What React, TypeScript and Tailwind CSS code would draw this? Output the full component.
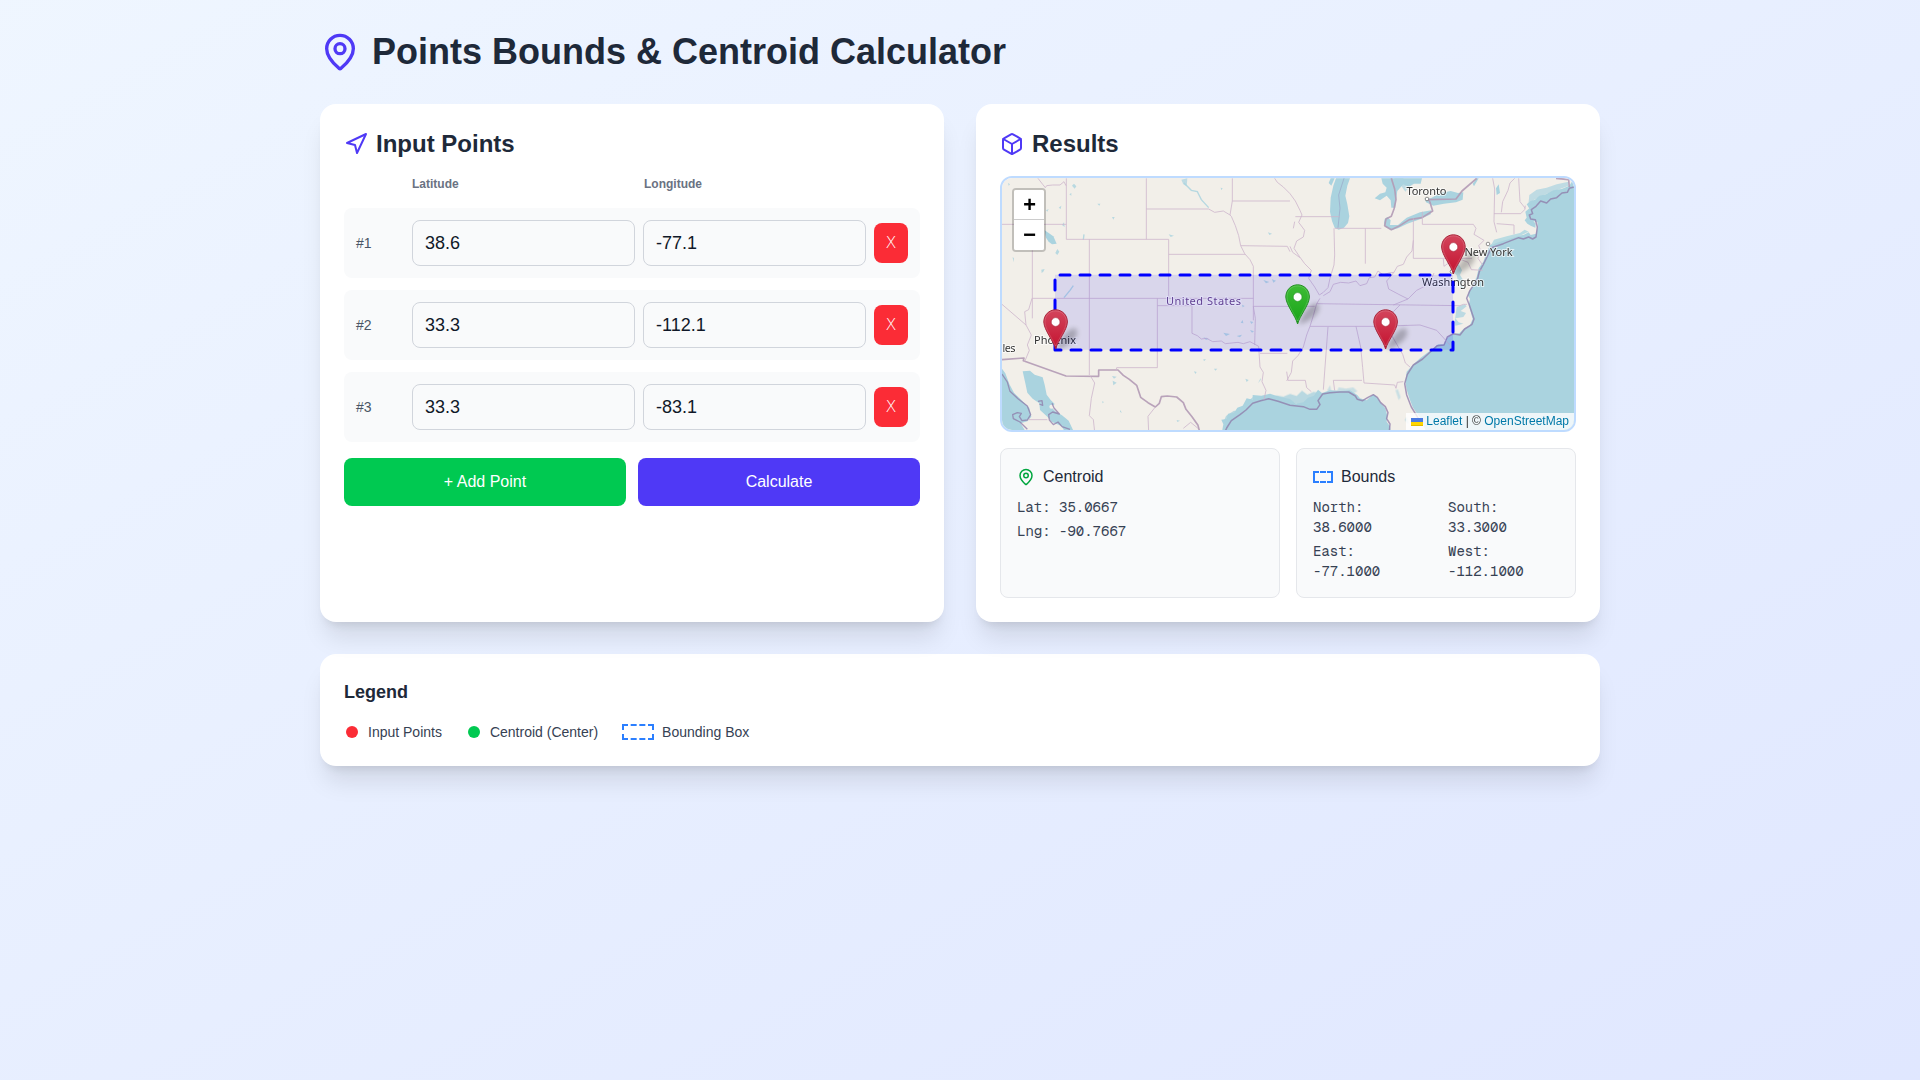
import { ReactNode } from "react";
import { Box, MapPin, Navigation } from "lucide-react";

const points = [
  { lat: "38.6", lng: "-77.1" },
  { lat: "33.3", lng: "-112.1" },
  { lat: "33.3", lng: "-83.1" },
];

const WATER = "#aad3df";

function Pin({ x, y, kind }: { x: number; y: number; kind: "red" | "green" }) {
  return (
    <g transform={`translate(${x} ${y})`}>
      <path d="M1 0C4 -9 10 -18 18 -21C24 -20 22 -12 16 -7C11 -3 5 0 1 0Z" fill="#000" opacity="0.24" filter="url(#soft)" />
      <path
        d="M0 0C-2 -8 -11.6 -19 -11.8 -27C-11.8 -34 -6.5 -39.2 0 -39.2C6.5 -39.2 11.8 -34 11.8 -27C11.6 -19 2 -8 0 0Z"
        fill={kind === "red" ? "url(#redPin)" : "url(#greenPin)"}
        stroke={kind === "red" ? "#a8253a" : "#238f23"}
        strokeWidth="1"
      />
      <path
        d="M0 -3C-3 -10 -10.5 -20 -10.7 -27C-10.7 -33.4 -6 -38.1 0 -38.1C6 -38.1 10.7 -33.4 10.7 -27C10.5 -20 3 -10 0 -3Z"
        fill="none"
        stroke="#fff"
        strokeOpacity="0.15"
        strokeWidth="1"
      />
      <circle cx="0" cy="-27" r="4.4" fill="#fff" stroke={kind === "red" ? "#a8253a" : "#238f23"} strokeWidth="0.6" />
    </g>
  );
}

function MapDrawing() {
  return (
    <svg className="block h-full w-full" viewBox="1002 178 572 252" preserveAspectRatio="none">
      <defs>
        <filter id="soft" x="-50%" y="-50%" width="200%" height="200%">
          <feGaussianBlur stdDeviation="2.6" />
        </filter>
        <linearGradient id="redPin" x1="0" y1="0" x2="0" y2="1">
          <stop offset="0" stopColor="#d3455c" />
          <stop offset="1" stopColor="#c4122f" />
        </linearGradient>
        <linearGradient id="greenPin" x1="0" y1="0" x2="0" y2="1">
          <stop offset="0" stopColor="#3ebc35" />
          <stop offset="1" stopColor="#17a317" />
        </linearGradient>
      </defs>
      <rect x="1002" y="178" width="572" height="252" fill="#f2efe9" />

      {/* Atlantic, Gulf and Pacific coasts */}
      <g transform="translate(1290 165) scale(0.33333)" fill={WATER}>
        <path d="M852 40L838 62L815 72L790 76L768 88L748 92L735 104L722 108L710 118L718 130L706 140L710 158L704 166L712 176L722 182L736 188L737 176L730 168L742 172L744 186L738 206L722 210L716 202L700 210L680 212L640 222L600 240L590 262L580 290L566 310L560 336L552 350L545 368L536 380L534 392L540 402L536 420L548 462L540 480L520 492L508 505L488 507L468 522L462 538L444 538L430 550L410 565L390 580L366 602L350 620L346 652L350 674L358 700L368 726L380 745L392 760L408 800L860 800L860 36Z" />
        <path d="M602 242L612 224L650 214L690 204L704 194L716 200L690 212L650 224L618 234Z" fill="#b9dbe2" />
        <path d="M-204 800L-200 778L-206 764L-190 762L-186 746L-168 744L-158 728L-142 722L-130 700L-112 704L-112 690L-86 692L-60 686L-30 696L0 702L18 716L40 712L54 698L72 692L84 674L96 684L120 676L150 678L180 676L202 690L210 700L230 706L250 688L262 698L274 716L286 730L292 752L290 770L300 784L302 800Z" />
        <path d="M500 426L524 418L530 424L512 438L528 444L520 456L496 460L506 472L520 476L496 482L494 470Z" opacity="0.75" />
        <path d="M496 300L506 296L516 316L510 330L520 346L514 360L526 372L514 370L504 350L500 330L490 322Z" opacity="0.8" />
      </g>
      <g transform="translate(990 300) scale(0.33333)" fill={WATER}>
        <path d="M36 206L46 220L58 252L72 278L92 298L118 324L124 350L112 364L92 370L104 390L112 400L36 400Z" />
        <path d="M98 214L120 212L134 224L158 232L164 254L170 284L182 300L194 312L184 322L196 334L216 346L236 362L250 392L228 400L214 378L186 366L172 350L150 330L148 310L128 296L112 278L106 250Z" />
        <circle cx="184" cy="320" r="6" fill="#f2efe9" />
      </g>

      {/* Great Lakes and inland water */}
      <g transform="translate(1290 165) scale(0.33333)" fill={WATER}>
        <path d="M138 40L130 62L122 98L120 140L126 168L134 188L146 194L162 188L174 174L178 154L172 118L166 92L172 62L180 40Z" />
        <path d="M122 40L116 54L124 62L134 40Z" />
        <path d="M274 40L278 56L290 68L286 82L270 86L254 100L270 106L290 92L302 106L304 128L316 128L318 106L322 78L340 58L356 66L372 56L392 56L396 40Z" />
        <path d="M312 40L332 60L346 80L354 70L342 50L340 40Z" opacity="0.7" />
        <path d="M284 162L292 156L302 166L300 180L324 180L350 158L390 142L424 136L422 148L392 162L352 176L324 190L304 196L286 186L282 174Z" />
        <path d="M404 100L422 100L452 84L482 78L504 84L520 82L518 104L498 112L462 116L430 122L408 112Z" />
        <path d="M560 40L548 56L552 64L566 40Z M626 58L630 84L620 90L618 70Z" />
        <path d="M718 90L740 74L770 68L800 58L836 50L836 62L800 76L760 90L730 106L714 128Z" opacity="0.7" />
      </g>
      <path transform="translate(1290 165) scale(0.33333)" d="M144 188L150 130L146 90L162 40" fill="none" stroke="#9fb4cf" strokeWidth="3" />
      <g transform="translate(990 165) scale(0.33333)" fill={WATER}>
        <path d="M164 196L176 204L190 214L200 236L186 238L176 230L168 218Z" />
        <path d="M246 62L252 56L259 64L254 71Z M238 88L244 84L244 92Z M216 180L222 172L224 186Z M154 314L164 312L160 320L155 324Z M196 264L202 252L208 260L202 270Z M206 128L214 122L212 132Z M168 136L176 132L172 140Z M54 54L60 58L56 62Z M322 116L331 116L328 122Z M366 156L374 156L370 164Z M536 208L552 212L542 216Z M692 68L698 70L694 76Z M834 202L846 206L838 210Z M68 276L72 280L70 292Z M708 302L714 308Z" opacity="0.8" />
        <path d="M574 44L592 40L590 64L580 58Z" opacity="0.7" />
        <path d="M582 54L604 76L622 80L634 104L656 128 M222 398L240 376L250 362 M280 224L282 208" fill="none" stroke={WATER} strokeWidth="4" opacity="0.85" />
      </g>
      <g fill={WATER} opacity="0.8" transform="translate(990 300) scale(0.33333)">
        <path d="M366 228L380 230L372 236Z M368 242L380 248L370 256Z M336 304L342 306L338 310Z M390 330L396 338L390 336Z M612 214L620 216L616 222Z M766 236L776 240L770 246Z M672 206L682 206L676 212Z M640 178L648 178L642 184Z M560 360L570 362L562 366Z M702 362L708 348L720 340L732 332L744 334L722 348L708 368Z M778 300L790 290L786 306Z M804 250L812 234L812 240Z M818 290L880 294L890 302L810 300Z" />
        <path d="M820 -60L838 -54L828 -50Z M846 -62L858 -58L850 -52Z M756 14L764 18L758 22Z M780 64L790 66L784 72Z M752 68L758 60L760 70Z M700 98L720 102L708 108Z M740 108L756 104L750 112Z M640 112L656 116L648 120Z M780 90L792 94L786 98Z" />
      </g>
      <g fill={WATER} opacity="0.8" transform="translate(1290 300) scale(0.33333)">
        <path d="M-60 298L-40 286L-20 290L0 282L20 288L36 272L52 284L70 276L92 278L84 296L70 302L84 312L66 322L50 312L30 318L10 308L-20 302Z" />
        <path d="M112 270L120 256L124 272L142 272L146 262L168 266L190 262L202 274L190 280L116 278Z M316 270L324 268L332 292L326 300Z M344 360L350 350L356 372Z" opacity="0.7" />
      </g>

      {/* Coastal boundary */}
      <g fill="none" stroke="#8d79a8" strokeOpacity="0.75" strokeWidth="4.5" strokeLinejoin="round">
        <path transform="translate(1290 165) scale(0.33333)" d="M852 66L838 70L832 82L816 84L800 98L782 102L770 114L752 108L738 124L724 134L728 146L718 150L722 162L736 164L742 186L738 216L728 222L716 216L700 222L686 218L640 236L604 248L594 270L580 298L568 320L562 344L552 358L540 376L530 400L538 420L546 444L552 462L546 478L524 492L510 510L490 506L472 516L462 540L442 542L424 558L398 582L370 600L352 628L344 656L350 690L364 726L380 752L396 780" />
        <path transform="translate(1290 300) scale(0.33333)" d="M-196 398L-190 384L-176 362L-150 344L-132 330L-112 310L-88 302L-64 296L-36 304L0 316L40 320L60 328L80 328L90 314L84 302L98 282L120 278L150 276L176 276L196 288L202 298L218 302L234 292L250 284L262 292L272 308L286 320L294 338L290 356L300 372L298 396" />
        <path transform="translate(990 300) scale(0.33333)" d="M36 222L52 246L60 274L84 296L112 318L122 344L112 360L96 362L88 350L94 340L82 338L68 344L70 356L90 366L112 388 M144 304L156 302L158 316L148 312 M186 310L192 324L208 342L188 336L176 344L178 360L190 374L204 366L216 380L240 388" strokeWidth="4" />
      </g>

      {/* National borders */}
      <g fill="none" stroke="#b39ab5" strokeWidth="5" strokeLinejoin="round" strokeOpacity="0.9">
        <path transform="translate(990 300) scale(0.33333)" d="M36 179L102 174L100 182L228 228L326 229L326 210L384 210L400 226L418 238L440 256L452 292L474 308L496 321L508 310L514 290L532 288L560 291L580 308L588 328L606 350L624 376L628 392" />
        <path transform="translate(1290 165) scale(0.33333)" d="M304 40L314 72L318 104L312 132L304 154L288 162L284 182L304 194L326 184L358 164L396 158L428 138L420 112L416 104L498 102L516 78L560 40 M798 40L836 44L838 66" />
      </g>

      {/* State boundaries */}
      <g fill="none" stroke="#cdb5cb" strokeWidth="3" strokeOpacity="0.8" strokeLinejoin="round">
        <g transform="translate(990 165) scale(0.33333)">
          <path d="M36 178L229 178 M229 40L229 223L536 223L536 400 M469 40L469 223 M469 132L656 132L674 142L700 138L720 150L724 154L736 182L746 212L752 242L764 266L780 284L790 304L790 466 M536 268L766 268 M127 256L127 460 M127 400L790 400 M298 223L298 630 M727 40L727 108L720 150 M727 108L900 108 M752 242L892 244L900 260 M144 40L158 58L166 68L170 62L188 60L210 60L222 50L228 62" />
          <path d="M854 40L862 52L880 66L900 86L916 108L930 136L936 150L926 172L944 196L940 216L920 228L912 250L928 274L944 296L964 316L956 340L974 366L988 390L1000 382L1014 368L1020 340L1032 300L1034 270L1032 190 M900 244L908 262L930 278 M916 155L1048 155 M1034 190L1174 190 M1126 190L1126 296 M1270 160L1270 280L1446 280 M1297 140L1297 178L1450 178L1458 190L1452 208L1482 226L1466 242L1472 256L1464 280L1478 300 M910 190L914 170 M1508 40L1514 72L1512 170L1520 202 M1512 146L1592 146L1604 134L1606 122 M1534 142L1538 110L1554 76L1560 54L1574 40 M1586 40L1590 110L1606 130 M1520 176L1572 180L1572 208 M1360 282L1362 304L1386 286L1402 300L1414 284L1434 292L1444 314L1478 316" />
          <path d="M1270 226L1266 258L1250 276L1240 298L1222 304L1212 322L1196 324L1180 330L1164 318L1154 336L1138 338L1130 356L1110 362L1098 348L1076 354L1052 352L1030 358L1020 380L1000 392 M1212 322L1190 348L1196 372L1230 390L1254 402L1280 376L1300 366L1320 352L1332 324 M980 416L1410 422L1420 418L1431 418 M960 484L1164 484L1290 480L1340 496L1380 540 M790 424L974 424 M1254 402L1210 420 M1176 480L1170 460L1210 440L1230 420" />
          <path d="M502 400L502 608L380 608L378 618 M502 422L606 422L606 505L622 512L634 522L650 520L668 530L694 528L706 536L744 532L760 536L780 530L806 544L810 606L820 622L816 650L828 676L822 704 M790 424L796 460L794 540 M810 565L892 565 M890 620L894 646L946 646L950 668L964 680 M36 418L108 480L104 440L116 434L126 400 M108 480L124 510L112 540L118 556L104 590 M302 634L314 654L304 700L298 752L310 764L314 800 M496 726L474 754L476 800 M114 764L172 764 M580 790L602 772L624 790" />
          <path d="M990 400L980 416L970 452L960 484L950 510L940 546L924 572L908 588L904 622L890 648 M1014 486L1000 674 M1098 484L1112 546L1118 608L1122 654L1214 660L1218 670L1222 652L1240 650 M1030 646L1116 646 M1030 646L1034 676 M1190 480L1210 520L1238 568L1246 594L1260 606" />
        </g>
      </g>

      {/* City markers and names */}
      <g fill="#fff" stroke="#666" strokeWidth="0.7">
        <circle cx="1427" cy="199" r="1.8" />
        <circle cx="1488" cy="244" r="1.8" />
        <circle cx="1452" cy="271.5" r="1.8" />
      </g>
      <g fontFamily="Noto Sans, sans-serif" fontSize="11" fill="#333" stroke="#fff" strokeOpacity="0.65" strokeWidth="2" paintOrder="stroke" textAnchor="middle">
        <text x="1426.5" y="195" textLength="40">Toronto</text>
        <text x="1488.5" y="256" textLength="48">New York</text>
        <text x="1453" y="285.5" textLength="62">Washington</text>
        <text x="1055" y="344" textLength="42">Phoenix</text>
        <text x="1009" y="352" textLength="13">les</text>
        <text x="1203.5" y="305" fill="#6e4a86" textLength="75">United States</text>
      </g>

      {/* Bounding rectangle */}
      <rect x="1055" y="274.8" width="398" height="75" fill="#00f" fillOpacity="0.1" />
      <path d="M1055 350L1055 275L1453 275L1453 350Z" fill="none" stroke="#00f" strokeWidth="3" strokeDasharray="10 10" strokeLinecap="round" strokeLinejoin="round" />

      <Pin x={1453.4} y={274} kind="red" />
      <Pin x={1297.6} y={324} kind="green" />
      <Pin x={1055.6} y={349} kind="red" />
      <Pin x={1385.6} y={349} kind="red" />
    </svg>
  );
}

function Card({ children }: { children: ReactNode }) {
  return <section className="rounded-2xl bg-white p-6 shadow-xl">{children}</section>;
}

export default function App() {
  return (
    <div className="min-h-screen bg-linear-to-br from-blue-50 to-indigo-100 p-8 font-['Liberation_Sans',sans-serif] text-gray-900">
      <div className="mx-auto max-w-[1280px]">
        <h1 className="mb-8 flex items-center gap-3 text-4xl font-bold text-gray-800">
          <MapPin size={40} className="text-indigo-600" />
          Points Bounds &amp; Centroid Calculator
        </h1>

        <div className="grid grid-cols-2 gap-8">
          <Card>
            <h2 className="mb-4 flex items-center gap-2 text-2xl font-bold text-gray-800">
              <Navigation size={24} className="text-indigo-600" />
              Input Points
            </h2>
            <div className="mb-4 flex gap-2 px-3 text-xs font-bold text-gray-500">
              <span className="w-12" />
              <span className="flex-1">Latitude</span>
              <span className="flex-1">Longitude</span>
              <span className="w-8" />
            </div>
            <div className="flex flex-col gap-3">
              {points.map((p, i) => (
                <div key={i} className="flex items-center gap-2 rounded-lg bg-gray-50 p-3">
                  <span className="w-12 text-sm text-gray-600">#{i + 1}</span>
                  <input className="min-w-0 flex-1 rounded-lg border border-gray-300 px-3 py-2 text-lg" defaultValue={p.lat} />
                  <input className="min-w-0 flex-1 rounded-lg border border-gray-300 px-3 py-2 text-lg" defaultValue={p.lng} />
                  <button className="w-[34px] rounded-lg bg-red-500 py-2 text-center font-['DejaVu_Sans',sans-serif] font-extralight text-white">X</button>
                </div>
              ))}
            </div>
            <div className="mt-4 flex gap-3">
              <button className="flex-1 rounded-lg bg-green-500 py-3 text-white">+ Add Point</button>
              <button className="flex-1 rounded-lg bg-indigo-600 py-3 text-white">Calculate</button>
            </div>
          </Card>

          <Card>
            <h2 className="mb-4 flex items-center gap-2 text-2xl font-bold text-gray-800">
              <Box size={24} className="text-indigo-600" />
              Results
            </h2>
            <div className="relative mb-4 h-64 overflow-hidden rounded-xl border-2 border-blue-200">
              <MapDrawing />
              <div className="absolute top-[10px] left-[10px] rounded-[4px] border-2 border-black/20 bg-clip-padding">
                <button className="block h-[30px] w-[30px] rounded-t-[2px] border-b border-[#ccc] bg-white pl-px text-center font-['Liberation_Mono',monospace] text-[22px] leading-[33px] font-bold text-black">
                  +
                </button>
                <button className="block h-[30px] w-[30px] rounded-b-[2px] bg-white pl-px text-center font-['Liberation_Mono',monospace] text-[22px] leading-[33px] font-bold text-black">
                  −
                </button>
              </div>
              <div className="absolute right-0 bottom-0 flex items-center bg-white/80 px-[5px] text-xs leading-[16.8px] text-[#333]">
                <svg className="mr-[3px] h-2 w-3" viewBox="0 0 12 8">
                  <path fill="#4C7BE1" d="M0 0h12v4H0z" />
                  <path fill="#FFD500" d="M0 4h12v3H0z" />
                  <path fill="#E0BC00" d="M0 7h12v1H0z" />
                </svg>
                <span className="text-[#0078a8]">Leaflet</span>
                <span className="whitespace-pre"> | © </span>
                <span className="text-[#0078a8]">OpenStreetMap</span>
              </div>
            </div>
            <div className="grid grid-cols-2 gap-4">
              <div className="rounded-lg border border-gray-200 bg-gray-50 p-4">
                <h3 className="mb-2 flex items-center gap-2 text-gray-800">
                  <MapPin size={18} className="text-green-600" />
                  Centroid
                </h3>
                <div className="space-y-1 font-['Geist_Mono','Liberation_Mono',monospace] text-sm text-gray-700">
                  <p>Lat: 35.0667</p>
                  <p>Lng: -90.7667</p>
                </div>
              </div>
              <div className="rounded-lg border border-gray-200 bg-gray-50 p-4">
                <h3 className="mb-2 flex items-center gap-2 text-gray-800">
                  <span className="h-3 w-5 border-2 border-dashed border-blue-500" />
                  Bounds
                </h3>
                <div className="grid grid-cols-2 gap-x-6 gap-y-1 font-['Geist_Mono','Liberation_Mono',monospace] text-sm text-gray-700">
                  <p>North: 38.6000</p>
                  <p>South: 33.3000</p>
                  <p>East: -77.1000</p>
                  <p>West: -112.1000</p>
                </div>
              </div>
            </div>
          </Card>
        </div>

        <div className="mt-8">
          <Card>
            <h3 className="mb-4 text-lg font-bold text-gray-800">Legend</h3>
            <div className="flex gap-6 text-sm text-gray-700">
              <div className="flex items-center gap-2">
                <span className="flex size-4 items-center justify-center">
                  <span className="size-3 rounded-full bg-red-500" />
                </span>
                Input Points
              </div>
              <div className="flex items-center gap-2">
                <span className="flex size-4 items-center justify-center">
                  <span className="size-3 rounded-full bg-green-500" />
                </span>
                Centroid (Center)
              </div>
              <div className="flex items-center gap-2">
                <span className="h-4 w-8 border-2 border-dashed border-blue-500" />
                Bounding Box
              </div>
            </div>
          </Card>
        </div>
      </div>
    </div>
  );
}
